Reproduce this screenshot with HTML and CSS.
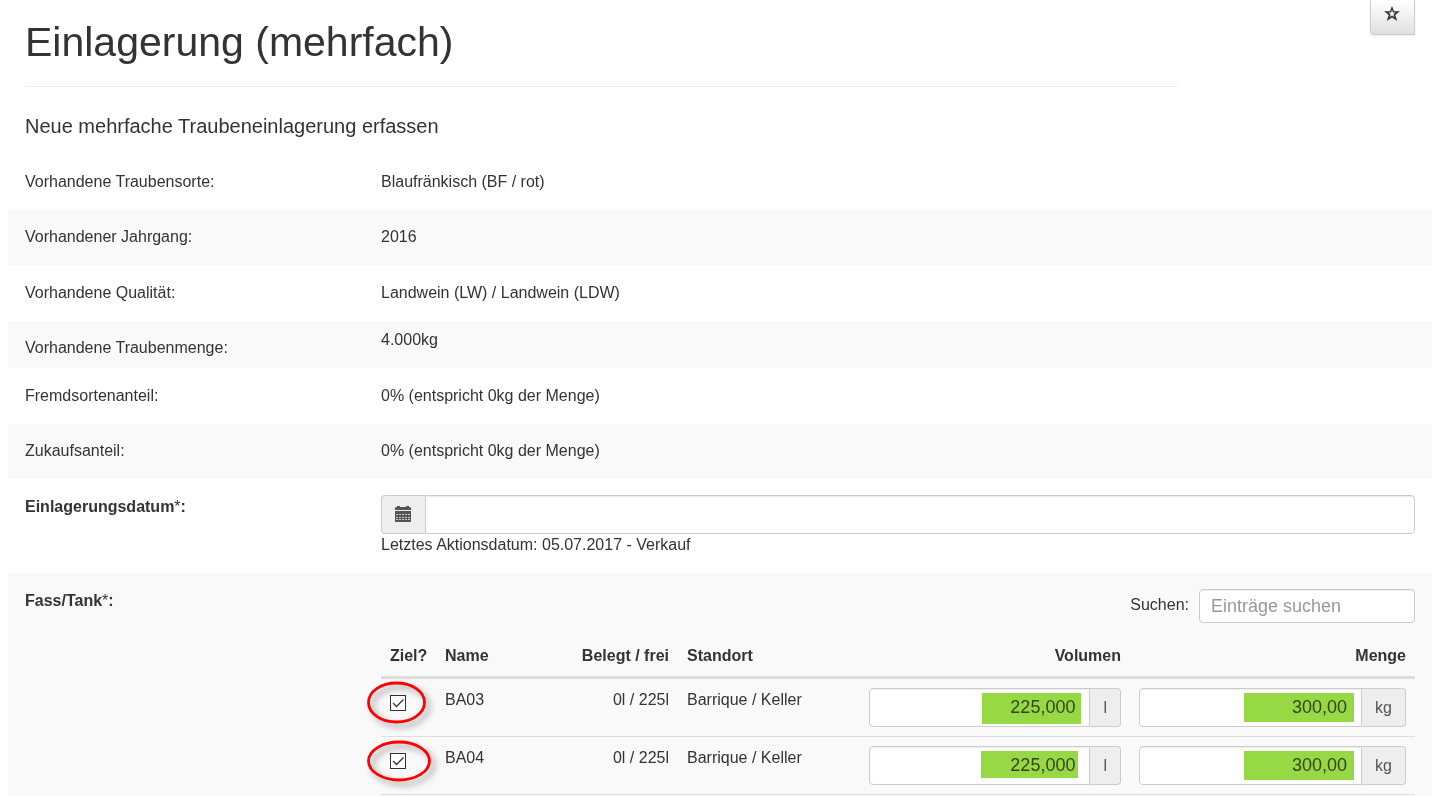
FILE: index.html
```html
<!DOCTYPE html>
<html lang="de">
<head>
<meta charset="utf-8">
<title>Einlagerung (mehrfach)</title>
<link rel="stylesheet" href="styles.css">
</head>
<body>
<main class="page">
  <header class="page-header">
    <div class="title-col"><h1 class="title">Einlagerung (mehrfach)</h1></div>
    <div class="action-col">
      <button class="fav-button" type="button" aria-label="Favorit">
        <svg class="fav-icon" viewBox="0 0 16 16" aria-hidden="true"><path fill-rule="evenodd" d="M8 0l2 5.200h6l-4.700 3.700 1.900 6.100L8 11.600 2.800 15l1.900-6.100L0 5.200h6zM8 4L7 6.600H4.500l2 1.700-.8 2.700L8 9.500l2.300 1.500-.8-2.700 2-1.700H9z"/></svg>
      </button>
    </div>
  </header>
  <h2 class="subtitle">Neue mehrfache Traubeneinlagerung erfassen</h2>

  <form class="form">
    <div class="row row-tall"><div class="label">Vorhandene Traubensorte:</div><div class="value">Blaufränkisch (BF / rot)</div></div>
    <div class="row row-shaded"><div class="label">Vorhandener Jahrgang:</div><div class="value">2016</div></div>
    <div class="row row-tall"><div class="label">Vorhandene Qualität:</div><div class="value">Landwein (LW) / Landwein (LDW)</div></div>
    <div class="row row-shaded row-compact"><div class="label">Vorhandene Traubenmenge:</div><div class="value">4.000kg</div></div>
    <div class="row row-tall"><div class="label">Fremdsortenanteil:</div><div class="value">0% (entspricht 0kg der Menge)</div></div>
    <div class="row row-shaded"><div class="label">Zukaufsanteil:</div><div class="value">0% (entspricht 0kg der Menge)</div></div>
    <div class="row">
      <label class="label label-required" for="date">Einlagerungsdatum<span class="star">*</span>:</label>
      <div class="value">
        <div class="group">
          <span class="addon addon-icon">
            <svg class="cal-icon" viewBox="0 0 16 16" aria-hidden="true"><path fill="#555" d="M1 1h1V0h3v1h6V0h3v1h1l1 1v2H0V2zM0 5h16v11H0z"/><path stroke="#ccc" stroke-width="1" stroke-dasharray="2 1" d="M1 8.500h14M1 11.500h14M1 13.500h14"/></svg>
          </span>
          <input class="control" id="date" type="text">
        </div>
        <div>Letztes Aktionsdatum: 05.07.2017 - Verkauf</div>
      </div>
    </div>
    <div class="row row-shaded">
      <div class="label label-required">Fass/Tank<span class="star">*</span>:</div>
      <div class="value">
        <div class="search">
          <label for="search">Suchen:</label>
          <input class="control search-input" id="search" type="search" placeholder="Einträge suchen">
        </div>
        <table class="tanks">
          <colgroup><col class="c-target"><col class="c-name"><col class="c-fill"><col class="c-place"><col class="c-volume"><col class="c-amount"></colgroup>
          <thead>
            <tr><th>Ziel?</th><th>Name</th><th class="num">Belegt / frei</th><th>Standort</th><th class="num">Volumen</th><th class="num">Menge</th></tr>
          </thead>
          <tbody>
            <tr>
              <td><span class="check"><input class="check-box" type="checkbox" checked aria-label="Ziel BA03"><svg class="tick" viewBox="0 0 16 16" aria-hidden="true"><path d="M3 8l3.500 3.500L13.500 4.500"/></svg><svg class="ring" viewBox="0 0 76 56" aria-hidden="true"><ellipse cx="36.500" cy="25.500" rx="28" ry="19.500"/></svg></span></td>
              <td>BA03</td><td class="num">0l / 225l</td><td>Barrique / Keller</td>
              <td><div class="group"><span class="field"><input class="control control-num" type="text" value="225,000" aria-label="Volumen BA03"><span class="mark mark-volume"></span></span><span class="addon addon-end">l</span></div></td>
              <td><div class="group"><span class="field"><input class="control control-num" type="text" value="300,00" aria-label="Menge BA03"><span class="mark mark-amount"></span></span><span class="addon addon-end">kg</span></div></td>
            </tr>
            <tr>
              <td><span class="check"><input class="check-box" type="checkbox" checked aria-label="Ziel BA04"><svg class="tick" viewBox="0 0 16 16" aria-hidden="true"><path d="M3 8l3.500 3.500L13.500 4.500"/></svg><svg class="ring" viewBox="0 0 76 56" aria-hidden="true"><ellipse cx="39" cy="26" rx="30.500" ry="19"/></svg></span></td>
              <td>BA04</td><td class="num">0l / 225l</td><td>Barrique / Keller</td>
              <td><div class="group"><span class="field"><input class="control control-num" type="text" value="225,000" aria-label="Volumen BA04"><span class="mark mark-volume-short"></span></span><span class="addon addon-end">l</span></div></td>
              <td><div class="group"><span class="field"><input class="control control-num" type="text" value="300,00" aria-label="Menge BA04"><span class="mark mark-amount"></span></span><span class="addon addon-end">kg</span></div></td>
            </tr>
          </tbody>
        </table>
      </div>
    </div>
  </form>
</main>
</body>
</html>
```
FILE: styles.css
```css
* { box-sizing: border-box; }
body {
  margin: 0;
  overflow: hidden;
  background: #fff;
  color: #333;
  font: 16px/22px "Liberation Sans", Arial, sans-serif;
}
input, button { font: inherit; }
.page { padding-left: 8px; }

.page-header { display: flex; align-items: flex-start; }
.title-col { width: 83.33%; padding: 0 17px; }
.title {
  margin: 0;
  padding: 18px 0 20px;
  border-bottom: 1px solid #eee;
  font-size: 41px;
  line-height: 48px;
  font-weight: 400;
}
.action-col { flex: 1; display: flex; justify-content: flex-end; padding-right: 17px; }
.fav-button {
  display: flex;
  justify-content: center;
  width: 45px;
  height: 35px;
  padding: 6px 1px 0 0;
  border: 1px solid #ccc;
  border-top: 0;
  border-radius: 0 0 0 4px;
  background: linear-gradient(#fff, #e0e0e0);
  box-shadow: 0 1px 2px rgba(0, 0, 0, .075);
}
.fav-icon { width: 16px; height: 16px; fill: #333; }
.subtitle {
  margin: 27px 17px 16px;
  font-size: 20px;
  line-height: 24px;
  font-weight: 400;
}

.row { display: flex; padding: 16px 0 17px; }
.row-tall { padding: 17px 0; }
.row-shaded { background: #f9f9f9; }
.row-compact { padding: 8px 0 9px; }
.row-compact .label { padding-top: 8px; }
.label { width: 25%; padding: 0 17px; }
.value { width: 75%; padding: 0 17px; }
.label-required { font-weight: 700; line-height: 24px; }
.star { font-weight: 400; }

.group { display: flex; }
.field { position: relative; display: flex; flex: 1; min-width: 0; }
.control {
  flex: 1;
  min-width: 0;
  height: 39px;
  padding: 0 13px;
  border: 1px solid #ccc;
  border-radius: 4px;
  background: #fff;
  box-shadow: inset 0 1px 1px rgba(0, 0, 0, .075);
  color: #555;
  font-size: 18px;
  outline: 0;
}
.control-num { padding-right: 14px; text-align: right; border-radius: 4px 0 0 4px; }
.addon {
  display: flex;
  align-items: center;
  padding: 0 13px;
  border: 1px solid #ccc;
  background: #eee;
  color: #555;
}
.addon-icon { border-right: 0; border-radius: 4px 0 0 4px; padding: 0 14px 2px 13px; }
.addon-icon + .control { border-radius: 0 4px 4px 0; }
.addon-end { border-left: 0; border-radius: 0 4px 4px 0; }
.cal-icon { width: 16px; height: 16px; }

.search { display: flex; justify-content: flex-end; gap: 10px; line-height: 31px; margin-bottom: 12px; }
.search-input { flex: 0 0 216px; height: 34px; padding: 0 11px; appearance: none; }
.search-input::placeholder { color: #999; opacity: 1; }

.tanks { width: 100%; table-layout: fixed; border-collapse: separate; border-spacing: 0; line-height: 23px; }
.c-target { width: 55px; }
.c-name { width: 127px; }
.c-fill { width: 115px; }
.c-place { width: 182px; }
.c-volume { width: 270px; }
.c-amount { width: 285px; }
.tanks th { padding: 9px; border-bottom: 3px solid #ddd; text-align: left; }
.tanks td { padding: 9px; border-bottom: 1px solid #ddd; vertical-align: top; }
.tanks .num { text-align: right; }

.check { position: relative; display: block; width: 16px; height: 16px; margin-top: 7px; }
.check-box {
  appearance: none;
  display: block;
  width: 16px;
  height: 16px;
  margin: 0;
  border: 1px solid #333;
  background: #fff;
}
.tick { position: absolute; inset: 0; width: 16px; height: 16px; fill: none; stroke: #333; stroke-width: 1.3; pointer-events: none; }
.check-box:not(:checked) + .tick { display: none; }
.ring {
  position: absolute;
  left: -30px;
  top: -18px;
  width: 76px;
  height: 56px;
  fill: none;
  stroke: #f00;
  stroke-width: 2.8;
  pointer-events: none;
  filter: drop-shadow(4px 4px 3px rgba(0, 0, 0, .4));
}
.mark { position: absolute; background: #97d845; mix-blend-mode: multiply; pointer-events: none; }
.mark-volume { top: 5px; right: 9px; width: 99px; height: 31px; }
.mark-volume-short { top: 5px; right: 12px; width: 97px; height: 27px; }
.mark-amount { top: 5px; right: 8px; width: 110px; height: 29px; }
```
